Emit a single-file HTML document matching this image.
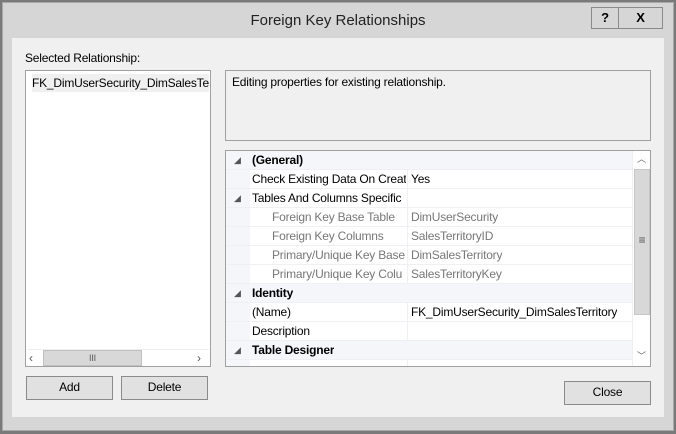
<!DOCTYPE html><html><head><style>
*{box-sizing:border-box;margin:0;padding:0}
body{width:676px;height:434px;background:#7a7a7a;font-family:"Liberation Sans",sans-serif;font-size:12px;letter-spacing:-0.2px;color:#000;position:relative;overflow:hidden}
.frame{position:absolute;left:2px;top:2px;width:672px;height:429px;background:#d6d6d6;border:1px solid #a8a8a8}
.client{position:absolute;left:12px;top:38px;width:652px;height:379px;background:#f0f0f0}
.a{position:absolute}
.title{left:0;top:12px;width:676px;text-align:center;font-size:15px;color:#222;letter-spacing:0}
.tb{top:7px;height:22px;border:1px solid #8a8a8a;background:#d6d6d6;font-weight:bold;text-align:center;line-height:20px;font-size:13px}
.btn{position:absolute;border:1px solid #8a8a8a;background:#e1e1e1;text-align:center;line-height:21px}
.row{position:absolute;left:0;width:406px;height:19px;line-height:18px;border-bottom:1px solid #eef0f3}
.row span{position:absolute;white-space:nowrap;overflow:hidden}
.n{width:154px}
.v{left:185px}
</style></head><body>
<div class="frame"></div>
<div class="a title">Foreign Key Relationships</div>
<div class="a tb" style="left:591px;width:28px">?</div>
<div class="a tb" style="left:618px;width:45px">X</div>
<div class="client"></div>
<div class="a" style="left:25px;top:51px">Selected Relationship:</div>
<div class="a" style="left:25px;top:70px;width:186px;height:297px;background:#fff;border:1px solid #a0a0a0">
 <div class="a" style="left:6px;top:3px;width:177px;height:18px;background:#f0f0f0;line-height:18px;white-space:nowrap;overflow:hidden">FK_DimUserSecurity_DimSalesTer</div>
 <div class="a" style="left:1px;top:278px;width:182px;height:17px;background:#fff;border-top:1px solid #eee">
  <div class="a" style="left:2px;top:0;color:#555;line-height:16px">‹</div>
  <div class="a" style="left:16px;top:0;width:99px;height:16px;background:#d8d8d8;border:1px solid #c0c0c0;text-align:center;font-size:9px;line-height:14px;color:#555">III</div>
  <div class="a" style="left:170px;top:0;color:#555;line-height:16px">›</div>
 </div>
</div>
<div class="a" style="left:225px;top:70px;width:426px;height:71px;background:#f0f0f0;border:1px solid #a0a0a0;padding:4px 6px">Editing properties for existing relationship.</div>
<div class="a" style="left:225px;top:150px;width:426px;height:217px;background:#fff;border:1px solid #a0a0a0;overflow:hidden">
 <div class="a" style="left:0;top:0;width:24px;height:217px;background:#f4f6f9"></div>
 <div class="a" style="left:181px;top:0;width:1px;height:217px;background:#eef0f3"></div>
 <div class="row" style="top:0;background:#f4f6f9;font-weight:bold"><span style="left:8px;font-weight:normal;font-size:9px;color:#555">◢</span><span style="left:26px">(General)</span></div>
 <div class="row" style="top:19px"><span class="n" style="left:26px">Check Existing Data On Creati</span><span class="v">Yes</span></div>
 <div class="row" style="top:38px"><span style="left:8px;font-size:9px;color:#555">◢</span><span class="n" style="left:26px">Tables And Columns Specific</span></div>
 <div class="row" style="top:57px;color:#777"><span style="left:46px;width:134px">Foreign Key Base Table</span><span class="v">DimUserSecurity</span></div>
 <div class="row" style="top:76px;color:#777"><span style="left:46px;width:134px">Foreign Key Columns</span><span class="v">SalesTerritoryID</span></div>
 <div class="row" style="top:95px;color:#777"><span style="left:46px;width:134px">Primary/Unique Key Base</span><span class="v">DimSalesTerritory</span></div>
 <div class="row" style="top:114px;color:#777"><span style="left:46px;width:134px">Primary/Unique Key Colu</span><span class="v">SalesTerritoryKey</span></div>
 <div class="row" style="top:133px;background:#f4f6f9;font-weight:bold"><span style="left:8px;font-weight:normal;font-size:9px;color:#555">◢</span><span style="left:26px">Identity</span></div>
 <div class="row" style="top:152px"><span style="left:26px">(Name)</span><span class="v">FK_DimUserSecurity_DimSalesTerritory</span></div>
 <div class="row" style="top:171px"><span style="left:26px">Description</span></div>
 <div class="row" style="top:190px;background:#f4f6f9;font-weight:bold"><span style="left:8px;font-weight:normal;font-size:9px;color:#555">◢</span><span style="left:26px">Table Designer</span></div>
 <div class="a" style="left:406px;top:0;width:18px;height:215px;background:#fff;border-left:1px solid #eee">
  <div class="a" style="left:4px;top:1px;font-size:9px;color:#666">︿</div>
  <div class="a" style="left:1px;top:18px;width:16px;height:146px;background:#d8d8d8;border:1px solid #c6c6c6;text-align:center;line-height:140px;color:#555">≡</div>
  <div class="a" style="left:4px;top:198px;font-size:9px;color:#666">﹀</div>
 </div>
</div>
<div class="btn" style="left:26px;top:376px;width:87px;height:24px">Add</div>
<div class="btn" style="left:121px;top:376px;width:87px;height:24px">Delete</div>
<div class="btn" style="left:564px;top:381px;width:87px;height:24px">Close</div>
</body></html>
